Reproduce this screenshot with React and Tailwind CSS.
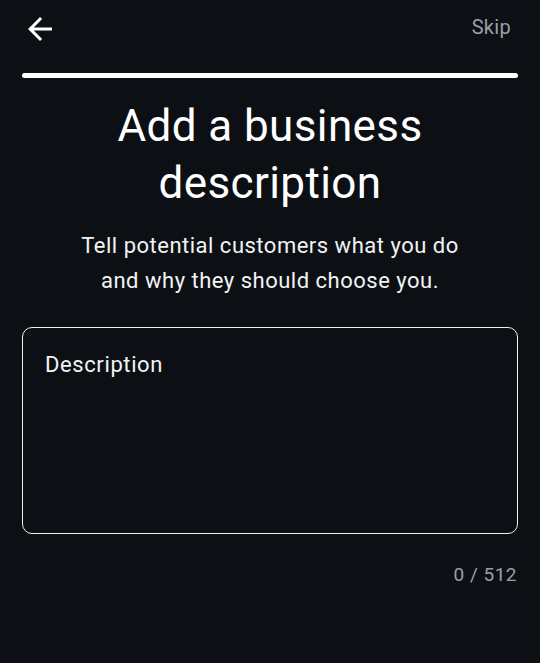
export default function App() {
  return (
    <div
      className="w-[540px] h-[663px] bg-[#0c1015] text-white flex flex-col"
      style={{ fontFamily: 'Roboto, "Noto Sans", sans-serif' }}
    >
      <div className="flex items-center justify-between pl-[22px] pr-[29px] pt-[11px] h-[46px]">
        <svg width="36" height="36" viewBox="0 0 24 24" fill="white">
          <path d="M20 11H7.83l5.59-5.59L12 4l-8 8 8 8 1.41-1.41L7.83 13H20v-2z" />
        </svg>
        <span className="text-[20px] text-[#9aa0a6] leading-none mb-[4px] tracking-[0.3px]">Skip</span>
      </div>
      <div className="px-[22px] mt-[27px]">
        <div className="h-[5px] rounded-full bg-white" />
      </div>
      <h1 className="mt-[20px] text-center text-[44px] leading-[57px] font-normal tracking-[0.4px]">
        Add a business
        <br />
        description
      </h1>
      <p className="mt-[16px] text-center text-[22px] leading-[35px] text-[#f1f3f4] tracking-[0.5px]">
        Tell potential customers what you do
        <br />
        and why they should choose you.
      </p>
      <div className="mx-[22px] mt-[29px] h-[207px] rounded-[10px] border-[1.5px] border-[#eef0f2] px-[22px] pt-[25px]">
        <div className="text-[22px] leading-[24px] tracking-[0.6px] text-[#f1f3f4]">Description</div>
      </div>
      <div className="px-[23px] mt-[29px] text-right text-[19px] leading-[24px] text-[#9aa0a6] tracking-[0.5px]">
        0 / 512
      </div>
    </div>
  );
}
